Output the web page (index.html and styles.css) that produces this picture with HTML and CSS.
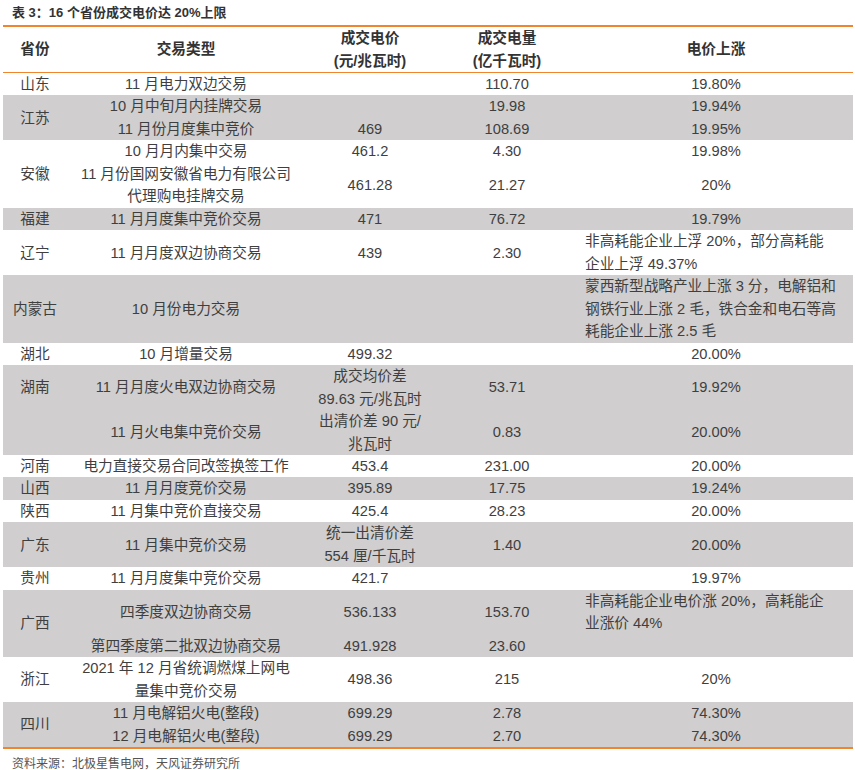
FILE: index.html
```html
<!DOCTYPE html>
<html lang="zh-CN">
<head>
<meta charset="utf-8">
<title>表 3</title>
<link rel="stylesheet" href="styles.css">
</head>
<body>
<div class="page">
  <div class="title">表 3：16 个省份成交电价达 20%上限</div>
  <table class="data">
    <colgroup>
      <col class="c1"><col class="c2"><col class="c3"><col class="c4"><col class="c5">
    </colgroup>
    <thead>
      <tr>
        <th>省份</th>
        <th>交易类型</th>
        <th>成交电价<br>(元/兆瓦时)</th>
        <th>成交电量<br>(亿千瓦时)</th>
        <th>电价上涨</th>
      </tr>
    </thead>
    <tbody>
      <tr class="w">
        <td class="prov">山东</td><td>11 月电力双边交易</td><td></td><td>110.70</td><td>19.80%</td>
      </tr>
      <tr class="g">
        <td class="prov" rowspan="2">江苏</td><td>10 月中旬月内挂牌交易</td><td></td><td>19.98</td><td>19.94%</td>
      </tr>
      <tr class="g">
        <td>11 月份月度集中竞价</td><td>469</td><td>108.69</td><td>19.95%</td>
      </tr>
      <tr class="w">
        <td class="prov" rowspan="2">安徽</td><td>10 月月内集中交易</td><td>461.2</td><td>4.30</td><td>19.98%</td>
      </tr>
      <tr class="w">
        <td>11 月份国网安徽省电力有限公司<br>代理购电挂牌交易</td><td>461.28</td><td>21.27</td><td>20%</td>
      </tr>
      <tr class="g">
        <td class="prov">福建</td><td>11 月月度集中竞价交易</td><td>471</td><td>76.72</td><td>19.79%</td>
      </tr>
      <tr class="w">
        <td class="prov">辽宁</td><td>11 月月度双边协商交易</td><td>439</td><td>2.30</td><td class="note">非高耗能企业上浮 20%，部分高耗能<br>企业上浮 49.37%</td>
      </tr>
      <tr class="g">
        <td class="prov">内蒙古</td><td>10 月份电力交易</td><td></td><td></td><td class="note">蒙西新型战略产业上涨 3 分，电解铝和<br>钢铁行业上涨 2 毛，铁合金和电石等高<br>耗能企业上涨 2.5 毛</td>
      </tr>
      <tr class="w">
        <td class="prov">湖北</td><td>10 月增量交易</td><td>499.32</td><td></td><td>20.00%</td>
      </tr>
      <tr class="g">
        <td class="prov">湖南</td><td>11 月月度火电双边协商交易</td><td>成交均价差<br>89.63 元/兆瓦时</td><td>53.71</td><td>19.92%</td>
      </tr>
      <tr class="g">
        <td class="prov"></td><td>11 月火电集中竞价交易</td><td>出清价差 90 元/<br>兆瓦时</td><td>0.83</td><td>20.00%</td>
      </tr>
      <tr class="w">
        <td class="prov">河南</td><td>电力直接交易合同改签换签工作</td><td>453.4</td><td>231.00</td><td>20.00%</td>
      </tr>
      <tr class="g">
        <td class="prov">山西</td><td>11 月月度竞价交易</td><td>395.89</td><td>17.75</td><td>19.24%</td>
      </tr>
      <tr class="w">
        <td class="prov">陕西</td><td>11 月集中竞价直接交易</td><td>425.4</td><td>28.23</td><td>20.00%</td>
      </tr>
      <tr class="g">
        <td class="prov">广东</td><td>11 月集中竞价交易</td><td>统一出清价差<br>554 厘/千瓦时</td><td>1.40</td><td>20.00%</td>
      </tr>
      <tr class="w">
        <td class="prov">贵州</td><td>11 月月度集中竞价交易</td><td>421.7</td><td></td><td>19.97%</td>
      </tr>
      <tr class="g">
        <td class="prov" rowspan="2">广西</td><td>四季度双边协商交易</td><td>536.133</td><td>153.70</td><td class="note">非高耗能企业电价涨 20%，高耗能企<br>业涨价 44%</td>
      </tr>
      <tr class="g">
        <td>第四季度第二批双边协商交易</td><td>491.928</td><td>23.60</td><td></td>
      </tr>
      <tr class="w">
        <td class="prov">浙江</td><td>2021 年 12 月省统调燃煤上网电<br>量集中竞价交易</td><td>498.36</td><td>215</td><td>20%</td>
      </tr>
      <tr class="g">
        <td class="prov" rowspan="2">四川</td><td>11 月电解铝火电(整段)</td><td>699.29</td><td>2.78</td><td>74.30%</td>
      </tr>
      <tr class="g">
        <td>12 月电解铝火电(整段)</td><td>699.29</td><td>2.70</td><td>74.30%</td>
      </tr>
    </tbody>
  </table>
  <div class="source">资料来源：北极星售电网，天风证券研究所</div>
</div>
</body>
</html>
```

FILE: styles.css
```css
html, body {
  margin: 0;
  padding: 0;
  background: #ffffff;
}

body {
  font-family: "Liberation Sans", "Noto Sans CJK SC", sans-serif;
  color: #3f3f3f;
}

.page {
  width: 855px;
  padding-left: 3px;
  box-sizing: border-box;
}

.title {
  height: 25px;
  line-height: 26px;
  padding-left: 9px;
  font-size: 13px;
  font-weight: bold;
  color: #333333;
}

.data {
  width: 850px;
  border-collapse: collapse;
  table-layout: fixed;
  border-top: 2px solid #f0852d;
  border-bottom: 2px solid #f0852d;
  font-size: 14.67px;
}

.c1 { width: 64px; }
.c2 { width: 238px; }
.c3 { width: 130px; }
.c4 { width: 144px; }
.c5 { width: 274px; }

.data th {
  height: 44px;
  padding: 0;
  line-height: 22.5px;
  font-weight: bold;
  color: #333333;
  text-align: center;
  vertical-align: middle;
  border-bottom: 1.5px solid #f0852d;
}

.data td {
  padding: 0;
  line-height: 22.47px;
  text-align: center;
  vertical-align: middle;
  white-space: nowrap;
}

.data tr.g td {
  background: #d0cece;
}

.data tr.w td {
  background: #ffffff;
}

.data td.note {
  text-align: left;
  padding-left: 6px;
}

.source {
  height: 30px;
  line-height: 30px;
  padding-left: 9px;
  font-size: 12px;
  color: #555555;
}
```
